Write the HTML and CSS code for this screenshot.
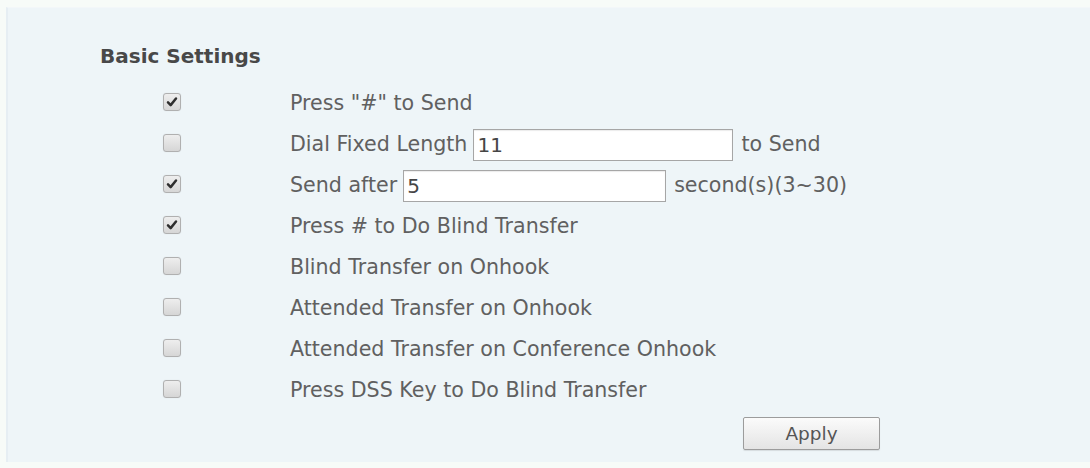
FILE: index.html
```html
<!DOCTYPE html>
<html lang="en">
<head>
<meta charset="utf-8">
<title>Basic Settings</title>
<link rel="stylesheet" href="styles.css">
</head>
<body>
<div class="panel">
  <h2 class="title">Basic Settings</h2>
  <div class="rows">
    <div class="row">
      <span class="cb checked"><svg viewBox="0 0 18 18"><path d="M4.5 9.5 L7.5 12.5 L13.5 5" /></svg></span>
      <span class="label">Press "#" to Send</span>
    </div>
    <div class="row">
      <span class="cb"></span>
      <span class="label">Dial Fixed Length <input class="field f1" type="text" value="11"> to Send</span>
    </div>
    <div class="row">
      <span class="cb checked"><svg viewBox="0 0 18 18"><path d="M4.5 9.5 L7.5 12.5 L13.5 5" /></svg></span>
      <span class="label">Send after <input class="field f2" type="text" value="5"> second(s)(3~30)</span>
    </div>
    <div class="row">
      <span class="cb checked"><svg viewBox="0 0 18 18"><path d="M4.5 9.5 L7.5 12.5 L13.5 5" /></svg></span>
      <span class="label">Press # to Do Blind Transfer</span>
    </div>
    <div class="row">
      <span class="cb"></span>
      <span class="label">Blind Transfer on Onhook</span>
    </div>
    <div class="row">
      <span class="cb"></span>
      <span class="label">Attended Transfer on Onhook</span>
    </div>
    <div class="row">
      <span class="cb"></span>
      <span class="label">Attended Transfer on Conference Onhook</span>
    </div>
    <div class="row">
      <span class="cb"></span>
      <span class="label">Press DSS Key to Do Blind Transfer</span>
    </div>
  </div>
  <div class="actions">
    <button class="btn" type="button">Apply</button>
  </div>
</div>
</body>
</html>
```

FILE: styles.css
```css
html, body {
  margin: 0;
  padding: 0;
  background: #f7fbf8;
}

body {
  font-family: "DejaVu Sans", Verdana, sans-serif;
  color: #606060;
}

.panel {
  margin: 7px 0 0 6px;
  height: 455px;
  background: #eef5f8;
  border-left: 2px solid #e6eef3;
  border-top: 1px solid #f3f7f9;
  box-sizing: border-box;
  padding-top: 36px;
}

.title {
  margin: 0 0 0 92px;
  font-size: 20px;
  line-height: 24px;
  font-weight: bold;
  color: #484848;
}

.rows {
  margin-top: 15px;
  display: flex;
  flex-direction: column;
}

.row {
  height: 41px;
  display: flex;
  align-items: center;
}

.cb {
  width: 16px;
  height: 16px;
  margin-left: 155px;
  margin-top: -3px;
  border: 1px solid #b0b0b0;
  border-radius: 3px;
  background: linear-gradient(#eeeeee, #d6d6d6);
  box-shadow: 0 0 1px rgba(0,0,0,0.15);
  display: flex;
  align-items: center;
  justify-content: center;
  flex: none;
}

.cb svg {
  width: 16px;
  height: 16px;
}

.cb svg path {
  fill: none;
  stroke: #2e2e2e;
  stroke-width: 2.8;
  stroke-linecap: round;
  stroke-linejoin: round;
}

.label {
  margin-left: 109px;
  font-size: 20.6px;
  line-height: 41px;
  white-space: nowrap;
  display: flex;
  align-items: center;
}

.field {
  font-family: "DejaVu Sans", Verdana, sans-serif;
  font-size: 20px;
  color: #454545;
  background: #fff;
  border: 1px solid #a6a6a6;
  border-radius: 0;
  box-shadow: inset 0 1px 1px rgba(0,0,0,0.08);
  height: 32px;
  box-sizing: border-box;
  padding: 0 3px;
  margin: 0 8px 0 6px;
  outline: none;
}

.f1 { width: 260px; }
.f2 { width: 263px; }

.actions {
  display: flex;
  padding-left: 735px;
  margin-top: 6px;
}

.btn {
  width: 137px;
  height: 33px;
  font-family: "DejaVu Sans", Verdana, sans-serif;
  font-size: 18.5px;
  color: #555;
  border: 1px solid #9c9c9c;
  border-radius: 2px;
  background: linear-gradient(#fbfbfb, #e4e4e4);
  box-shadow: 0 1px 1px rgba(0,0,0,0.1);
  padding: 0;
  cursor: pointer;
}
```
